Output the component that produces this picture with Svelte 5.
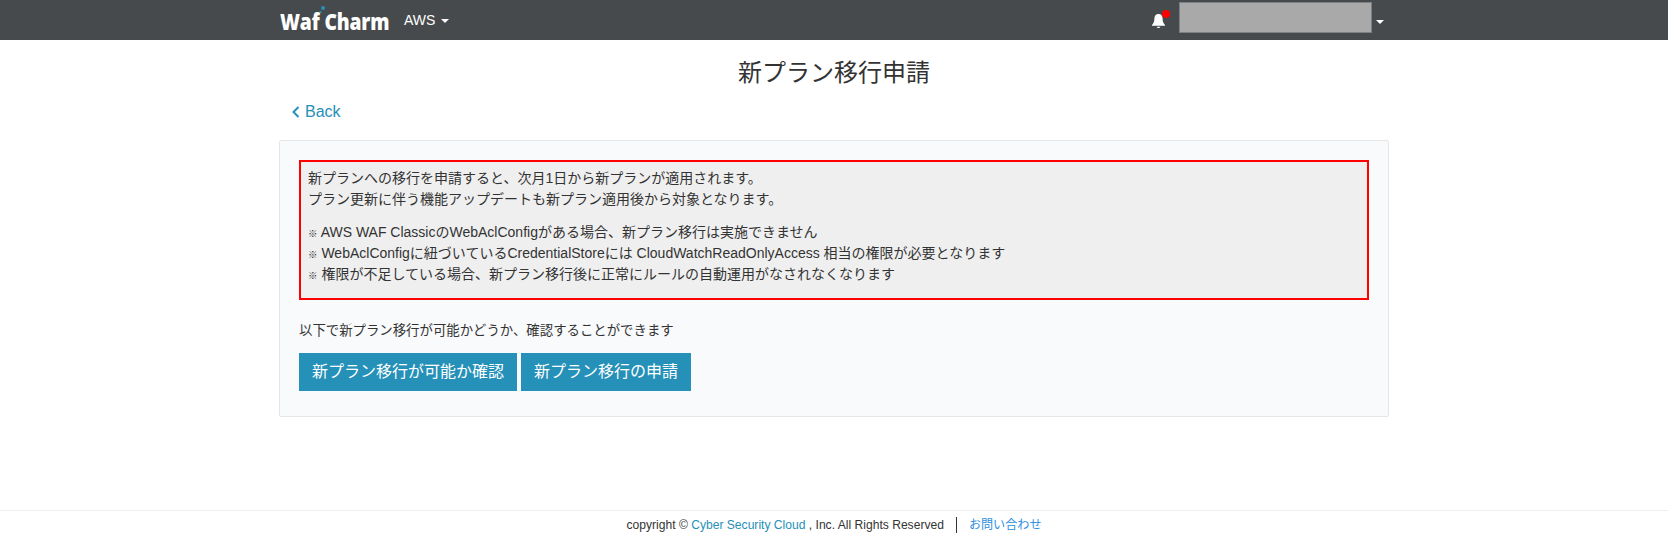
<script>
  const notes = [
    "AWS WAF ClassicのWebAclConfigがある場合、新プラン移行は実施できません",
    "WebAclConfigに紐づいているCredentialStoreには CloudWatchReadOnlyAccess 相当の権限が必要となります",
    "権限が不足している場合、新プラン移行後に正常にルールの自動運用がなされなくなります",
  ];
</script>

<div class="page">
  <header class="navbar">
    <div class="container nav-inner">
      <a class="logo" href="#top">
        <span class="logo-text">Waf<span class="logo-dots"><i class="dot big"></i><i class="dot small"></i></span>Charm</span>
      </a>
      <a class="nav-link" href="#aws">AWS <span class="caret"></span></a>
      <div class="nav-right">
        <span class="bell">
          <svg width="15" height="16" viewBox="0 0 15 16" aria-hidden="true">
            <path fill="#fff" d="M7.5 1C4.9 1 3.4 3 3.4 5.6c0 3.2-.9 5-2.4 6.3v.9h13v-.9c-1.500-1.300-2.400-3.100-2.400-6.300C11.600 3 10.100 1 7.500 1z" />
            <path fill="#fff" d="M5.700 13.700h3.600c-.2.900-.9 1.400-1.800 1.400s-1.600-.5-1.800-1.400z" />
          </svg>
          <i class="badge"></i>
        </span>
        <span class="user-mask"></span>
        <span class="caret user-caret"></span>
      </div>
    </div>
  </header>

  <main class="container">
    <h1>新プラン移行申請</h1>
    <a class="back" href="#back">
      <svg width="8" height="12" viewBox="0 0 8 12" aria-hidden="true">
        <path d="M6.500 1 1.500 6l5 5" fill="none" stroke="currentColor" stroke-width="2" />
      </svg>
      Back
    </a>

    <section class="panel">
      <div class="notice">
        <p>新プランへの移行を申請すると、次月1日から新プランが適用されます。<br />プラン更新に伴う機能アップデートも新プラン適用後から対象となります。</p>
        <ul>
          {#each notes as note}
            <li><small>※</small> {note}</li>
          {/each}
        </ul>
      </div>
      <p class="lead">以下で新プラン移行が可能かどうか、確認することができます</p>
      <div class="actions">
        <button type="button">新プラン移行が可能か確認</button>
        <button type="button">新プラン移行の申請</button>
      </div>
    </section>
  </main>

  <footer>
    <span>copyright © <a href="#csc">Cyber Security Cloud</a> , Inc. All Rights Reserved</span>
    <i class="sep"></i>
    <a class="contact" href="#contact">お問い合わせ</a>
  </footer>
</div>

<style>
  :global(body) {
    margin: 0;
    background: #fff;
    color: #333;
    font-family: "Liberation Sans", "Noto Sans CJK JP", sans-serif;
    font-size: 14px;
    line-height: 1.5;
  }

  a {
    text-decoration: none;
    color: #2590b8;
  }

  .page {
    height: 535px;
    display: flex;
    flex-direction: column;
    overflow: hidden;
  }

  .container {
    box-sizing: border-box;
    width: 1110px;
    margin: 0 auto;
  }

  .navbar {
    height: 40px;
    flex: none;
    background: #464a4c;
  }

  .nav-inner {
    height: 40px;
    display: flex;
    align-items: center;
  }

  .logo {
    margin-left: 1px;
    width: 124px;
    color: #fff;
  }

  .logo-text {
    display: inline-block;
    font-family: "Open Sans", sans-serif;
    font-weight: 800;
    font-size: 23.5px;
    line-height: 1;
    letter-spacing: -0.2px;
    transform: scaleX(0.82);
    transform-origin: left center;
    margin-top: 5px;
    white-space: nowrap;
  }

  .logo-dots {
    display: inline-block;
    position: relative;
    width: 6px;
    height: 10px;
  }

  .dot {
    position: absolute;
    border-radius: 50%;
    background: #2590b8;
  }

  .dot.big {
    width: 5px;
    height: 4px;
    left: 2px;
    top: -14px;
  }

  .dot.small {
    width: 3px;
    height: 2px;
    left: 0;
    top: -9px;
  }

  .nav-link {
    color: #fff;
    font-size: 14px;
  }

  .caret {
    display: inline-block;
    width: 0;
    height: 0;
    margin-left: 2px;
    vertical-align: middle;
    border-top: 4px solid #fff;
    border-left: 4px solid transparent;
    border-right: 4px solid transparent;
  }

  .nav-right {
    margin-left: auto;
    margin-right: 5px;
    display: flex;
    align-items: center;
  }

  .bell {
    position: relative;
    display: block;
    width: 15px;
    height: 16px;
    margin-top: 2px;
    margin-right: 13px;
  }

  .bell svg {
    display: block;
  }

  .badge {
    position: absolute;
    top: -3px;
    right: -4px;
    width: 8px;
    height: 8px;
    border-radius: 50%;
    background: #f00;
  }

  .user-mask {
    display: block;
    width: 193px;
    height: 31px;
    background: #a9a9a9;
    border: 1px solid #7d8082;
    box-sizing: border-box;
    margin-top: -6px;
  }

  .user-caret {
    margin-left: 4px;
    margin-top: 4px;
  }

  h1 {
    margin: 18px 0 0;
    font-size: 24px;
    font-weight: 400;
    line-height: 29px;
    text-align: center;
  }

  .back {
    display: inline-flex;
    align-items: center;
    gap: 5px;
    margin: 13px 0 0 13px;
    font-size: 16px;
    line-height: 24px;
  }

  .panel {
    box-sizing: border-box;
    height: 277px;
    margin-top: 16px;
    padding: 19px;
    background: #f9fafc;
    border: 1px solid #e4e6e8;
    border-radius: 2px;
  }

  .notice {
    box-sizing: border-box;
    height: 140px;
    padding: 6px 7px;
    background: #efefef;
    border: 2px solid #f00;
    font-size: 14px;
    line-height: 21px;
  }

  .notice p {
    margin: 0 0 12px;
  }

  .notice ul {
    margin: 0;
    padding: 0;
    list-style: none;
  }

  .notice small {
    font-size: 9.5px;
    font-weight: 700;
    line-height: 0;
  }

  .lead {
    margin: 20px 0 0;
    font-size: 13.4px;
    line-height: 21px;
  }

  .actions {
    display: flex;
    gap: 4px;
    margin-top: 12px;
  }

  button {
    height: 38px;
    padding: 0 13px;
    border: 0;
    background: #2590b8;
    color: #fff;
    font: inherit;
    font-size: 16px;
  }

  footer {
    margin-top: auto;
    height: 25px;
    box-sizing: border-box;
    border-top: 1px solid #eceeef;
    padding-top: 4px;
    display: flex;
    justify-content: center;
    align-items: center;
    font-size: 12.1px;
  }

  .sep {
    width: 1px;
    height: 16px;
    background: #333;
    margin: 0 12px;
  }

  .contact {
    color: #2d8fe0;
  }
</style>
